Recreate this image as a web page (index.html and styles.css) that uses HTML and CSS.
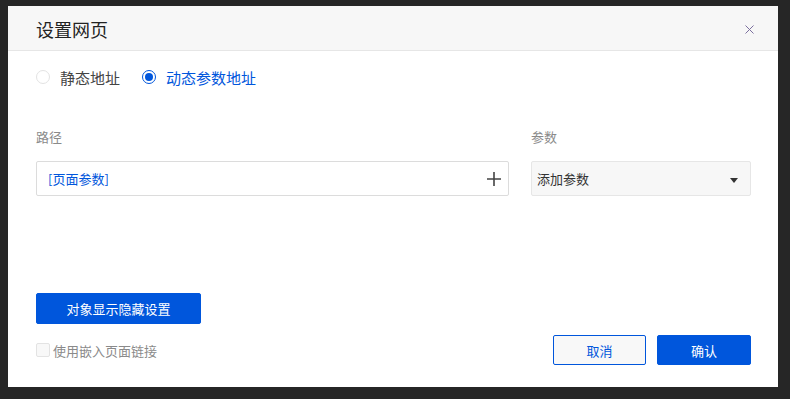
FILE: index.html
```html
<!DOCTYPE html>
<html lang="zh-CN">
<head>
  <meta charset="UTF-8">
  <title>设置网页</title>
  <link rel="stylesheet" href="styles.css">
</head>
<body>
  <div class="dialog">
    <header class="dialog-header">
      <h1>设置网页</h1>
      <button class="close-btn" aria-label="关闭">
        <svg viewBox="0 0 9 9" width="9" height="9"><path d="M0.5 0.5L8.5 8.5M8.5 0.5L0.5 8.5" stroke="#7b6f9e" stroke-width="1" fill="none"/></svg>
      </button>
    </header>

    <div class="dialog-body">
      <div class="radio-group">
        <label class="radio"><span class="radio-dot"></span>静态地址</label>
        <label class="radio checked"><span class="radio-dot"></span>动态参数地址</label>
      </div>

      <div class="fields">
        <div class="field field-path">
          <div class="field-label">路径</div>
          <div class="path-input">
            <span class="path-value">[页面参数]</span>
            <svg class="plus" viewBox="0 0 16 16" width="16" height="16"><path d="M8 1V15M1 8H15" stroke="#444" stroke-width="1.6" fill="none"/></svg>
          </div>
        </div>
        <div class="field field-param">
          <div class="field-label">参数</div>
          <div class="select">
            <span>添加参数</span>
            <svg class="caret" viewBox="0 0 8 5" width="8" height="5"><path d="M0 0H8L4 5Z" fill="#333"/></svg>
          </div>
        </div>
      </div>

      <button class="btn btn-primary btn-wide">对象显示隐藏设置</button>

      <div class="dialog-footer">
        <label class="checkbox"><span class="check-box"></span>使用嵌入页面链接</label>
        <div class="button-group">
          <button class="btn btn-default">取消</button>
          <button class="btn btn-primary">确认</button>
        </div>
      </div>
    </div>
  </div>
</body>
</html>
```

FILE: styles.css
```css
:root {
  --primary: #0056dc;
  --border: #dcdcdc;
  --muted: #8a8a8a;
  --text: #333;
}

body {
  margin: 0;
  background-color: #262626;
  font-family: "Noto Sans CJK SC", "Noto Sans", sans-serif;
  color: var(--text);
  height: 399px;
  overflow: hidden;
}

.dialog {
  width: 770px;
  height: 381px;
  margin: 6px 0 0 8px;
  background: white;
  box-sizing: border-box;
}

.dialog-header {
  height: 45px;
  box-sizing: border-box;
  background: #f7f7f7;
  border-bottom: 1px solid #e6e6e6;
  display: flex;
  align-items: center;
  justify-content: space-between;
  padding: 0 24px 0 28px;
}

h1 {
  margin: 0;
  font-size: 18px;
  font-weight: 400;
  color: #222;
  line-height: 1;
  padding-top: 2px;
}

.close-btn {
  border: none;
  background: none;
  padding: 0;
  display: flex;
  margin-top: 3px;
}

.dialog-body {
  padding: 0 27px 0 28px;
}

.radio-group {
  display: flex;
  gap: 22px;
  margin-top: 16px;
  height: 20px;
  align-items: center;
}

.radio {
  display: flex;
  align-items: center;
  gap: 10px;
  font-size: 15px;
  color: #444;
}

.radio-dot {
  width: 12px;
  height: 12px;
  border: 1px solid #e3e3e3;
  border-radius: 50%;
  box-sizing: content-box;
  position: relative;
}

.radio.checked {
  color: var(--primary);
}

.radio.checked .radio-dot {
  border-color: var(--primary);
}

.radio.checked .radio-dot::after {
  content: "";
  position: absolute;
  inset: 2px;
  border-radius: 50%;
  background: var(--primary);
}

.fields {
  display: flex;
  gap: 22px;
  margin-top: 41px;
}

.field-path {
  width: 473px;
}

.field-param {
  width: 220px;
}

.field-label {
  font-size: 13px;
  color: var(--muted);
  line-height: 18px;
  margin-bottom: 15px;
}

.path-input,
.select {
  height: 35px;
  box-sizing: border-box;
  border: 1px solid var(--border);
  border-radius: 2px;
  display: flex;
  align-items: center;
  justify-content: space-between;
  font-size: 13px;
}

.path-input {
  padding: 0 6px 0 11px;
}

.path-value {
  color: var(--primary);
}

.select {
  background: #f7f7f7;
  border-color: #e6e6e6;
  padding: 0 12px 0 5px;
  color: #333;
}

.caret {
  margin-top: 3px;
}

.btn {
  font-family: inherit;
  font-size: 13px;
  border-radius: 2px;
  cursor: pointer;
  height: 30px;
  box-sizing: border-box;
}

.btn-primary {
  background: var(--primary);
  color: white;
  border: 1px solid var(--primary);
}

.btn-default {
  background: #f8f8f8;
  color: var(--primary);
  border: 1px solid var(--primary);
}

.btn-wide {
  display: block;
  width: 165px;
  height: 31px;
  margin-top: 97px;
}

.dialog-footer {
  display: flex;
  justify-content: space-between;
  align-items: center;
  margin-top: 11px;
}

.checkbox {
  display: flex;
  align-items: center;
  gap: 3px;
  font-size: 13px;
  color: var(--muted);
}

.check-box {
  width: 12px;
  height: 12px;
  border: 1px solid #e3e3e3;
  border-radius: 2px;
  background: #f8f8f8;
}

.button-group {
  display: flex;
  gap: 11px;
}

.button-group .btn {
  width: 94px;
}

.button-group .btn-default {
  width: 93px;
}
```
